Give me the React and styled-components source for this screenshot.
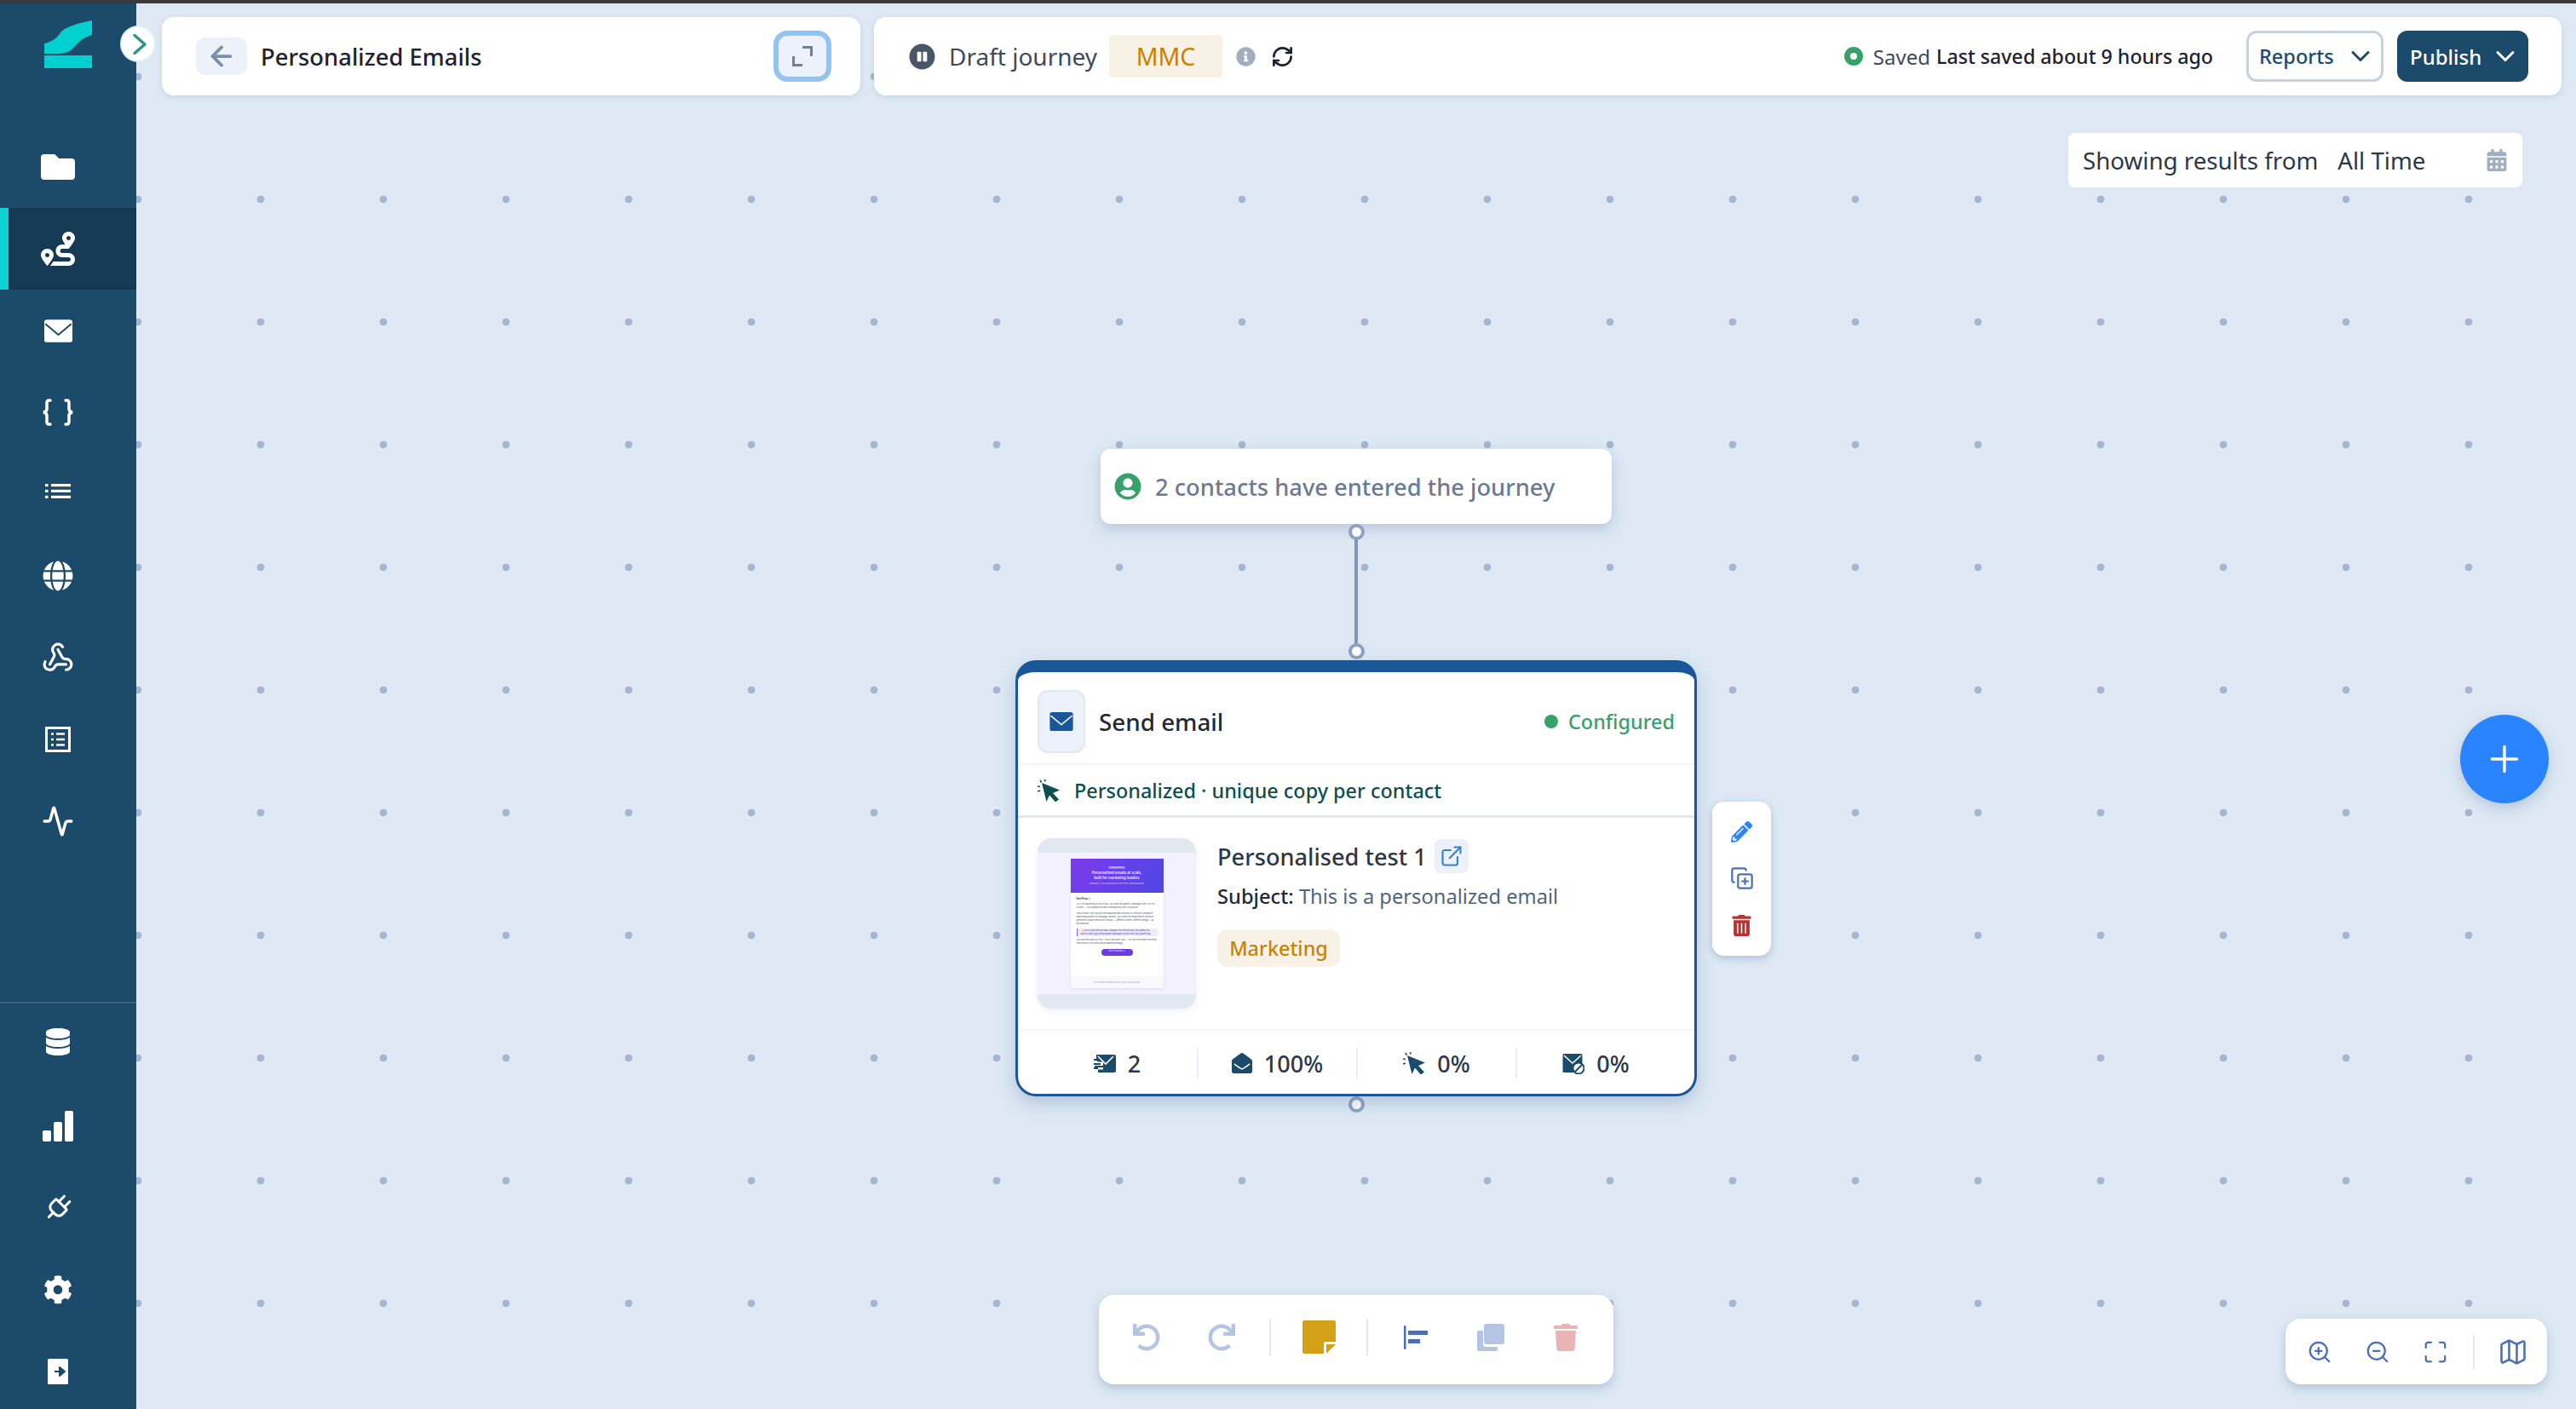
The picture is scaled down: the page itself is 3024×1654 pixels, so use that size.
import React from 'react';
import styled, { createGlobalStyle } from 'styled-components';
import {
  FaFolder,
  FaRoute,
  FaGlobe,
  FaDatabase,
  FaCog,
  FaUserCircle,
  FaPauseCircle,
  FaInfoCircle,
  FaCalendarAlt,
  FaPencilAlt,
  FaTrashAlt,
  FaTrash,
  FaUndo,
  FaRedo,
  FaEnvelopeOpen,
} from 'react-icons/fa';
import {
  Activity,
  ArrowLeft,
  CopyPlus,
  ExternalLink,
  Map as MapIcon,
  Maximize,
  Plug,
  Plus,
  RefreshCw,
  Webhook,
  ZoomIn,
  ZoomOut,
} from 'lucide-react';

const GlobalStyle = createGlobalStyle`
  html, body {
    margin: 0;
    padding: 0;
    height: 100%;
  }
  body {
    font-family: "Noto Sans", "Open Sans", sans-serif;
    color: #1a2233;
    background: #dde8f4;
  }
  * {
    box-sizing: border-box;
  }
`;

const Shell = styled.div`
  position: relative;
  display: flex;
  flex-direction: column;
  width: 100%;
  height: 100vh;
  overflow: hidden;
`;

const TitleStrip = styled.div`
  flex: 0 0 4px;
  background: #3b3b3b;
`;

const Main = styled.div`
  flex: 1;
  display: flex;
  min-height: 0;
`;

const Sidebar = styled.nav`
  flex: 0 0 160px;
  display: flex;
  flex-direction: column;
  background: #1b4a6b;
`;

const LogoBox = styled.div`
  height: 144px;
  padding: 20px 0 0 52px;
`;

const NavList = styled.div`
  display: flex;
  flex-direction: column;
`;

const NavBottom = styled(NavList)`
  margin-top: auto;
  margin-bottom: -4px;
  border-top: 2px solid #39627f;
`;

const NavItem = styled.div`
  height: 96px;
  display: flex;
  align-items: center;
  justify-content: center;
  padding-right: 24px;
  padding-bottom: ${(p) => p.$lift || 0}px;
  color: #fff;
  background: ${(p) => (p.$active ? '#163a54' : 'transparent')};
  box-shadow: ${(p) => (p.$active ? 'inset 10px 0 0 #0fd0d0' : 'none')};
`;

const CollapseToggle = styled.button`
  position: absolute;
  left: 141px;
  top: 30px;
  width: 42px;
  height: 43px;
  display: flex;
  align-items: center;
  justify-content: center;
  padding: 0 0 0 3px;
  border: 2px solid #e6edf5;
  border-radius: 50%;
  background: #fff;
  color: #2a9488;
`;

const Canvas = styled.main`
  position: relative;
  flex: 1;
  display: flex;
  flex-direction: column;
  padding: 16px 17px 0 30px;
  background-color: #dde8f4;
  background-image: radial-gradient(circle, #a3b6cc 4px, transparent 4.6px);
  background-size: 144px 144px;
  background-position: -70px 14px;
`;

const TopRow = styled.div`
  display: flex;
  gap: 16px;
`;

const HeaderCard = styled.div`
  flex: ${(p) => (p.$grow ? '1' : '0 0 820px')};
  height: 92px;
  display: flex;
  align-items: center;
  padding: ${(p) => (p.$grow ? '0 39px 0 41px' : '0 34px 0 40px')};
  background: #fff;
  border-radius: 14px;
  box-shadow: 0 2px 6px rgba(90, 115, 150, 0.16);
`;

const BackButton = styled.button`
  width: 60px;
  height: 44px;
  display: flex;
  align-items: center;
  justify-content: center;
  padding: 0;
  border: none;
  border-radius: 10px;
  background: #edf1f9;
  color: #7890aa;
`;

const JourneyName = styled.span`
  margin-left: 16px;
  font-size: 27.4px;
  font-weight: 500;
  color: #1a2233;
`;

const ExpandButton = styled.button`
  margin-left: auto;
  width: 68px;
  height: 60px;
  display: flex;
  align-items: center;
  justify-content: center;
  padding: 0;
  border: 6px solid #93c3f0;
  border-radius: 16px;
  background: #edf1f9;
  color: #718096;
`;

const StatusText = styled.span`
  margin-left: 16px;
  font-size: 28px;
  color: #3d4a5c;
`;

const OrgTag = styled.span`
  margin-left: 14px;
  width: 133px;
  height: 50px;
  display: flex;
  align-items: center;
  justify-content: center;
  border-radius: 4px;
  background: #f8f2e6;
  color: #c98200;
  font-size: 28.5px;
`;

const IconSlot = styled.span`
  display: flex;
  margin-left: ${(p) => p.$gap || 0}px;
  color: ${(p) => p.$color || 'inherit'};
`;

const CalendarSlot = styled(IconSlot)`
  margin-left: auto;
`;

const SavedDot = styled.span`
  margin-left: auto;
  width: 22px;
  height: 22px;
  border: 7px solid #38a169;
  border-radius: 50%;
  background: #fff;
`;

const SavedText = styled.span`
  margin-left: 12px;
  font-size: 24px;
  color: #3d4a5c;
`;

const SavedAt = styled.span`
  margin-left: 7px;
  font-size: 23.2px;
  font-weight: 500;
  color: #1a2233;
`;

const HeadButton = styled.button`
  height: 60px;
  width: ${(p) => p.$width}px;
  margin-left: ${(p) => p.$gap}px;
  display: flex;
  align-items: center;
  justify-content: space-between;
  padding: 0 12px;
  border: 3px solid ${(p) => (p.$primary ? '#1b4a6b' : '#c5d2df')};
  border-radius: 12px;
  background: ${(p) => (p.$primary ? '#1b4a6b' : '#fff')};
  color: ${(p) => (p.$primary ? '#fff' : '#1b4a6b')};
  font-family: inherit;
  font-size: ${(p) => (p.$primary ? '24px' : '23.5px')};
  font-weight: 500;
`;

const RangeChip = styled.div`
  align-self: flex-end;
  margin: 44px 46px 0 0;
  width: 533px;
  height: 64px;
  display: flex;
  align-items: center;
  padding: 0 17px;
  border-radius: 8px;
  background: #fff;
  font-size: 27.7px;
  color: #2d3748;
`;

const RangeValue = styled.span`
  margin-left: 23px;
`;

const Flow = styled.div`
  position: absolute;
  left: 1032px;
  top: 523px;
  width: 800px;
  display: flex;
  flex-direction: column;
  align-items: center;
`;

const EntryNode = styled.div`
  width: 600px;
  height: 88px;
  display: flex;
  align-items: center;
  gap: 16px;
  padding-left: 16px;
  border-radius: 12px;
  background: #fff;
  box-shadow: 0 6px 16px rgba(90, 115, 150, 0.28);
  color: #6b7a94;
  font-size: 27.3px;
  font-weight: 500;
`;

const Handle = styled.span`
  width: 19px;
  height: 19px;
  flex: none;
  border: 4px solid #8ea2c0;
  border-radius: 50%;
  background: #fff;
`;

const Edge = styled.span`
  width: 4px;
  height: 123px;
  margin: -1px 0;
  background: #7f96b6;
`;

const EmailCard = styled.section`
  position: relative;
  width: 800px;
  height: 512px;
  margin-top: 1px;
  display: flex;
  flex-direction: column;
  border: 3px solid #1a5799;
  border-top-width: 14px;
  border-radius: 24px;
  background: #fff;
  box-shadow: 0 8px 20px rgba(90, 115, 150, 0.3);
`;

const CardHead = styled.header`
  height: 109px;
  display: flex;
  align-items: center;
  padding: 8px 23px 0;
  border-bottom: 2px solid #f4f6fa;
`;

const TypeIcon = styled.span`
  width: 56px;
  height: 74px;
  display: flex;
  align-items: center;
  justify-content: center;
  border: 2px solid #e2e8f0;
  border-radius: 12px;
  background: #ecf0f8;
  color: #1a5799;
`;

const CardTitle = styled.h2`
  margin: 0 0 0 16px;
  font-size: 27.8px;
  font-weight: 500;
  color: #1f2937;
`;

const ConfigState = styled.span`
  margin-left: auto;
  display: flex;
  align-items: center;
  gap: 12px;
  color: #38a169;
  font-size: 23.4px;
  font-weight: 500;
`;

const GreenDot = styled.span`
  width: 16px;
  height: 16px;
  border-radius: 50%;
  background: #38a169;
`;

const ModeRow = styled.div`
  height: 62px;
  display: flex;
  align-items: center;
  gap: 17px;
  padding: 0 23px;
  border-bottom: 3px solid #e2e8f0;
  color: #0b4f4f;
  font-size: 23.4px;
  font-weight: 500;
`;

const CardBody = styled.div`
  flex: 1;
  display: flex;
  align-items: flex-start;
  gap: 25px;
  padding: 24px 23px 0;
  border-bottom: 2px solid #f4f6fa;
`;

const Thumb = styled.div`
  flex: 0 0 186px;
  height: 200px;
  display: flex;
  justify-content: center;
  padding-top: 7px;
  border-top: 17px solid #e2e8f0;
  border-bottom: 17px solid #e2e8f0;
  border-radius: 16px;
  background: #f3f1ff;
  box-shadow: 0 2px 6px rgba(90, 115, 150, 0.12);
  overflow: hidden;
`;

const MiniMail = styled.div`
  width: 109px;
  height: 152px;
  display: flex;
  flex-direction: column;
  background: #fff;
  font-family: "Inter", sans-serif;
  color: #4b5563;
  box-shadow: 0 1px 3px rgba(90, 80, 180, 0.14);
`;

const MiniHero = styled.div`
  height: 40px;
  display: flex;
  flex-direction: column;
  align-items: center;
  justify-content: center;
  background: linear-gradient(120deg, #7c3aed, #4f46e5);
  color: #f2eeff;
  text-align: center;
`;

const MiniBadge = styled.span`
  padding: 0 2px;
  border-radius: 1px;
  background: rgba(255, 255, 255, 0.3);
  font-size: 2px;
  line-height: 3px;
`;

const MiniHeadline = styled.div`
  margin-top: 2px;
  font-size: 4.2px;
  font-weight: 600;
  line-height: 6.5px;
`;

const MiniSub = styled.div`
  margin-top: 1px;
  font-size: 2.4px;
  line-height: 4px;
  color: #d9d0ff;
`;

const MiniBody = styled.div`
  flex: 1;
  padding: 5px 7px 0;
  font-size: 2.4px;
  line-height: 4.1px;
`;

const MiniHello = styled.div`
  margin-bottom: 3px;
  font-size: 2.8px;
  font-weight: 700;
  color: #1f2937;
`;

const MiniText = styled.p`
  margin: 0 0 2.5px;
`;

const MiniCallout = styled.div`
  margin: 3px 0;
  padding: 1px 4px;
  border-left: 1px solid #7c6be8;
  background: #eeebfd;
  color: #4338ca;
  line-height: 3.6px;
`;

const MiniCta = styled.div`
  width: 37px;
  height: 8px;
  margin: 3px auto 0;
  display: flex;
  align-items: center;
  justify-content: center;
  border-radius: 4px;
  background: #6d3be0;
  color: #fff;
  font-size: 2.4px;
`;

const MiniFoot = styled.div`
  height: 14px;
  display: flex;
  align-items: center;
  justify-content: center;
  background: #f9f9fd;
  color: #a1a1b5;
  font-size: 2px;
`;

const Details = styled.div`
  display: flex;
  flex-direction: column;
  align-items: flex-start;
  min-width: 0;
`;

const TemplateRow = styled.div`
  display: flex;
  align-items: center;
  gap: 9px;
  height: 42px;
  font-size: 27.2px;
  font-weight: 500;
  color: #2d3748;
`;

const LinkButton = styled.span`
  width: 40px;
  height: 40px;
  display: flex;
  align-items: center;
  justify-content: center;
  border-radius: 8px;
  background: #ecf0f8;
  color: #3182ce;
`;

const SubjectLine = styled.div`
  margin-top: 9px;
  font-size: 23.7px;
  line-height: 34px;
  color: #4f6583;
`;

const SubjectLabel = styled.span`
  font-weight: 500;
  color: #1f2937;
`;

const CategoryPill = styled.span`
  margin-top: 22px;
  width: 144px;
  height: 44px;
  display: flex;
  align-items: center;
  justify-content: center;
  border-radius: 12px;
  background: #f8f2e6;
  color: #c98200;
  font-size: 23.4px;
  font-weight: 500;
`;

const StatsRow = styled.div`
  flex: 0 0 74px;
  display: grid;
  grid-template-columns: repeat(4, 187px);
  align-items: center;
  padding: 2px 23px 0;
`;

const Stat = styled.div`
  height: 36px;
  display: flex;
  align-items: center;
  justify-content: center;
  gap: 14px;
  border-left: ${(p) => (p.$first ? 'none' : '2px solid #e8edf3')};
  color: #1b4a6b;
`;

const StatValue = styled.span`
  font-size: 27px;
  font-weight: 500;
  color: #2d3748;
`;

const NodeActions = styled.div`
  position: absolute;
  left: calc(100% + 21px);
  top: 152px;
  width: 69px;
  height: 181px;
  display: flex;
  flex-direction: column;
  align-items: center;
  gap: 29px;
  padding-top: 22px;
  border-radius: 14px;
  background: #fff;
  box-shadow: 0 3px 8px rgba(90, 115, 150, 0.35);
`;

const ActionIcon = styled.span`
  display: flex;
  height: 26px;
  align-items: center;
  color: ${(p) => p.$color};
`;

const Fab = styled.button`
  position: absolute;
  right: 32px;
  top: 835px;
  width: 104px;
  height: 104px;
  display: flex;
  align-items: center;
  justify-content: center;
  padding: 0;
  border: none;
  border-radius: 50%;
  background: #2a84ff;
  color: #fff;
  box-shadow: 0 6px 16px rgba(90, 115, 150, 0.28);
`;

const FloatBar = styled.div`
  position: absolute;
  bottom: 29px;
  display: flex;
  align-items: center;
  padding: 0 ${(p) => p.$pad}px;
  background: #fff;
  border-radius: 18px;
  box-shadow: 0 5px 12px rgba(90, 115, 150, 0.3);
`;

const EditBar = styled(FloatBar)`
  left: 1130px;
  height: 105px;
  padding-bottom: 6px;
`;

const ViewBar = styled(FloatBar)`
  right: 34px;
  height: 77px;
`;

const BarSlot = styled.span`
  width: ${(p) => p.$width}px;
  display: flex;
  justify-content: center;
  color: ${(p) => p.$color};
`;

const BarDivider = styled.span`
  width: 2px;
  height: ${(p) => p.$height}px;
  margin: 0 ${(p) => p.$gap}px;
  background: #e2e8f0;
`;

const Mail = ({ width, height, line }) => (
  <svg width={width} height={height} viewBox="0 0 26 21">
    <rect width="26" height="21" rx="2.5" fill="currentColor" />
    <path d="M1 4l12 10 12-10" fill="none" stroke={line} strokeWidth="1.6" />
  </svg>
);

const Braces = () => (
  <svg width="38" height="32" viewBox="0 0 38 32" fill="none" stroke="currentColor" strokeWidth="3.5" strokeLinecap="round">
    <path d="M10 2H8.5C6.5 2 6 3.5 6 5v7c0 2-1.5 3.5-4 4 2.5.5 4 2 4 4v7c0 1.5.5 3 2.5 3H10" />
    <path d="M28 2h1.5C31.5 2 32 3.5 32 5v7c0 2 1.5 3.5 4 4-2.500.5-4 2-4 4v7c0 1.5-.5 3-2.500 3H28" />
  </svg>
);

const ListLines = () => (
  <svg width="30" height="17" viewBox="0 0 30 17" fill="currentColor">
    <rect width="3.5" height="3.2" />
    <rect y="6.8" width="3.5" height="3.2" />
    <rect y="13.8" width="3.5" height="3.2" />
    <rect x="7" width="23" height="3.2" />
    <rect x="7" y="6.8" width="23" height="3.2" />
    <rect x="7" y="13.8" width="23" height="3.2" />
  </svg>
);

const FormList = () => (
  <svg width="30" height="30" viewBox="0 0 30 30">
    <rect x="1.5" y="1.5" width="27" height="27" fill="none" stroke="currentColor" strokeWidth="3" />
    <path d="M7 8.5h3M13 8.5h10M7 15h3M13 15h10M7 21.5h3M13 21.5h10" stroke="currentColor" strokeWidth="2.6" />
  </svg>
);

const Bars = () => (
  <svg width="36" height="36" viewBox="0 0 36 36" fill="currentColor">
    <rect y="23" width="10" height="13" rx="2" />
    <rect x="13" y="13" width="10" height="23" rx="2" />
    <rect x="26" width="10" height="36" rx="2" />
  </svg>
);

const ExitBox = () => (
  <svg width="24" height="30" viewBox="0 0 24 30">
    <rect width="24" height="30" rx="1.5" fill="#fff" />
    <path d="M8 15h11M14 10l6 5-6 5z" fill="#1b4a6b" stroke="#1b4a6b" strokeWidth="2" strokeLinejoin="round" />
  </svg>
);

const Logo = () => (
  <svg width="56" height="56" viewBox="0 0 56 56" fill="#00d1cf">
    <path d="M56 0v17C43 20 38 29 31 35c-7 5-17 4-31 4V27c9-2 15-6 20-14C27 7 40 3 56 0z" />
    <rect y="41" width="56" height="15" />
  </svg>
);

const CornerExpand = () => (
  <svg width="24" height="24" viewBox="0 0 24 24" fill="none" stroke="currentColor" strokeWidth="3">
    <path d="M12 1.5h10.5V12M12 22.5H1.5V12" />
  </svg>
);

const Caret = () => (
  <svg width="24" height="14" viewBox="0 0 24 14" fill="none" stroke="currentColor" strokeWidth="3" strokeLinecap="round" strokeLinejoin="round">
    <path d="M3 2.5l9 9 9-9" />
  </svg>
);

const ToggleCaret = () => (
  <svg width="18" height="26" viewBox="0 0 18 26" fill="none" stroke="currentColor" strokeWidth="3.4" strokeLinecap="round" strokeLinejoin="round">
    <path d="M3 2.5L15 13 3 23.5" />
  </svg>
);

const ClickPointer = ({ size, color }) => (
  <svg width={size} height={size} viewBox="0 0 26 26">
    <path d="M5 4l21 8.500-8 3.500 7 7.500-4 3-7-8-3.500 7.500z" fill={color} />
    <path d="M8.500 0l.5 2.500M3 1l1.500 2.500M0 8l3 .5M0 14l3-1" stroke={color} strokeWidth="1.6" />
  </svg>
);

const SentMail = () => (
  <svg width="26" height="21" viewBox="0 0 26 21" fill="#1b4a6b">
    <path d="M3 0h21a2 2 0 0 1 2 2v17a2 2 0 0 1-2 2H5v-3.500h6V15H1v-2h10V8.500H5L3 7z" />
    <path d="M5 2l9 9 9-9" fill="none" stroke="#fff" strokeWidth="1.6" />
    <rect y="5" width="7" height="2" />
    <rect y="10" width="8" height="2" />
    <rect y="15" width="5" height="2" />
  </svg>
);

const BlockedMail = () => (
  <svg width="26" height="26" viewBox="0 0 26 26">
    <path d="M2 2h20a1.500 1.500 0 0 1 1.500 1.500V24H2a1.500 1.500 0 0 1-1.500-1.500v-19A1.500 1.500 0 0 1 2 2z" fill="#1b4a6b" />
    <path d="M2 4l10 9 10-9" fill="none" stroke="#fff" strokeWidth="1.6" />
    <circle cx="19" cy="19" r="6.5" fill="#fff" stroke="#1b4a6b" strokeWidth="2" />
    <path d="M15 23l8-8" stroke="#1b4a6b" strokeWidth="2" />
  </svg>
);

const StickyNote = () => (
  <svg width="39" height="39" viewBox="0 0 39 39">
    <path d="M2 0h35a2 2 0 0 1 2 2v23H27a2 2 0 0 0-2 2v12H2a2 2 0 0 1-2-2V2a2 2 0 0 1 2-2z" fill="#d4a017" />
    <path d="M39 28L28 39V28z" fill="#d4a017" />
  </svg>
);

const AlignLeft = () => (
  <svg width="28" height="28" viewBox="0 0 28 28" fill="#4a6fb5">
    <rect width="2.5" height="28" rx="1" />
    <rect x="5" y="6" width="23" height="5" />
    <rect x="5" y="16" width="14" height="5" />
  </svg>
);

const CopyStack = () => (
  <svg width="32" height="32" viewBox="0 0 32 32" fill="#b4c5e4">
    <path d="M2 8h5v16a3 3 0 0 0 3 3h14v3a2 2 0 0 1-2 2H2a2 2 0 0 1-2-2V10a2 2 0 0 1 2-2z" />
    <rect x="8" width="24" height="24" rx="3" />
  </svg>
);

const topNav = [
  { icon: <FaFolder size={40} /> },
  { icon: <FaRoute size={40} />, active: true },
  { icon: <Mail width={33} height={27} line="#1b4a6b" /> },
  { icon: <Braces /> },
  { icon: <ListLines />, lift: 8 },
  { icon: <FaGlobe size={36} /> },
  { icon: <Webhook size={38} strokeWidth={2} /> },
  { icon: <FormList /> },
  { icon: <Activity size={38} strokeWidth={2.2} /> },
];

const bottomNav = [
  { id: 'data', icon: <FaDatabase size={32} />, lift: 6 },
  { id: 'bars', icon: <Bars /> },
  { id: 'plug', icon: <Plug size={36} strokeWidth={2} style={{ transform: 'rotate(45deg)' }} /> },
  { id: 'cog', icon: <FaCog size={34} /> },
  { id: 'exit', icon: <ExitBox /> },
];

const stats = [
  { icon: <SentMail />, value: '2' },
  { icon: <FaEnvelopeOpen size={24} />, value: '100%' },
  { icon: <ClickPointer size={26} color="#1b4a6b" />, value: '0%' },
  { icon: <BlockedMail />, value: '0%' },
];

function EmailThumb() {
  return (
    <Thumb>
      <MiniMail>
        <MiniHero>
          <MiniBadge>SPRING UPDATE</MiniBadge>
          <MiniHeadline>
            Personalized emails at scale,
            <br />
            built for marketing leaders
          </MiniHeadline>
          <MiniSub>Relevance, your way and built with every personalization</MiniSub>
        </MiniHero>
        <MiniBody>
          <MiniHello>Hey Priya 👋</MiniHello>
          <MiniText>As VP of Marketing at NorthLoop, you know that generic campaigns don't cut it in FinTech — your audience expects relevance at every touchpoint.</MiniText>
          <MiniText>That's exactly why we built Personalized Email Sections in Inflection. Instead of maintaining dozens of campaign variants, you create one email and let Inflection generate a unique version per contact — different content, different design — all automatically.</MiniText>
          <MiniCallout>💡 For a 15,000 person SaaS company like ServiceLoop, this means you save a hyper-logic personalized campaigns without the copy guide filing.</MiniCallout>
          <MiniText>You can even open in HTML, you're welcome, Clay — no your enrichment workflow flows directly into a few words/sample message.</MiniText>
          <MiniCta>See it in action →</MiniCta>
        </MiniBody>
        <MiniFoot>You received this email because you are a valued contact</MiniFoot>
      </MiniMail>
    </Thumb>
  );
}

export default function App() {
  return (
    <Shell>
      <GlobalStyle />
      <TitleStrip />
      <Main>
        <Sidebar>
          <LogoBox>
            <Logo />
          </LogoBox>
          <NavList>
            {topNav.map((item, i) => (
              <NavItem key={i} $active={item.active} $lift={item.lift}>
                {item.icon}
              </NavItem>
            ))}
          </NavList>
          <NavBottom>
            {bottomNav.map((item) => (
              <NavItem key={item.id} $lift={item.lift}>
                {item.icon}
              </NavItem>
            ))}
          </NavBottom>
        </Sidebar>

        <Canvas>
          <TopRow>
            <HeaderCard>
              <BackButton>
                <ArrowLeft size={36} strokeWidth={2.5} />
              </BackButton>
              <JourneyName>Personalized Emails</JourneyName>
              <ExpandButton>
                <CornerExpand />
              </ExpandButton>
            </HeaderCard>
            <HeaderCard $grow>
              <IconSlot $color="#4a5568">
                <FaPauseCircle size={31} />
              </IconSlot>
              <StatusText>Draft journey</StatusText>
              <OrgTag>MMC</OrgTag>
              <IconSlot $gap={16} $color="#a0aec0">
                <FaInfoCircle size={23} />
              </IconSlot>
              <IconSlot $gap={18} $color="#1a2233">
                <RefreshCw size={27} strokeWidth={2.4} />
              </IconSlot>
              <SavedDot />
              <SavedText>Saved</SavedText>
              <SavedAt>Last saved about 9 hours ago</SavedAt>
              <HeadButton $width={161} $gap={39}>
                Reports
                <Caret />
              </HeadButton>
              <HeadButton $width={154} $gap={16} $primary>
                Publish
                <Caret />
              </HeadButton>
            </HeaderCard>
          </TopRow>

          <RangeChip>
            Showing results from
            <RangeValue>All Time</RangeValue>
            <CalendarSlot $color="#a0aec0">
              <FaCalendarAlt size={26} />
            </CalendarSlot>
          </RangeChip>

          <Flow>
            <EntryNode>
              <IconSlot $color="#38a169">
                <FaUserCircle size={32} />
              </IconSlot>
              2 contacts have entered the journey
            </EntryNode>
            <Handle />
            <Edge />
            <Handle />
            <EmailCard>
              <CardHead>
                <TypeIcon>
                  <Mail width={28} height={22} line="#ecf0f8" />
                </TypeIcon>
                <CardTitle>Send email</CardTitle>
                <ConfigState>
                  <GreenDot />
                  Configured
                </ConfigState>
              </CardHead>
              <ModeRow>
                <ClickPointer size={26} color="#0b4f4f" />
                Personalized · unique copy per contact
              </ModeRow>
              <CardBody>
                <EmailThumb />
                <Details>
                  <TemplateRow>
                    Personalised test 1
                    <LinkButton>
                      <ExternalLink size={28} strokeWidth={1.8} />
                    </LinkButton>
                  </TemplateRow>
                  <SubjectLine>
                    <SubjectLabel>Subject:</SubjectLabel> This is a personalized email
                  </SubjectLine>
                  <CategoryPill>Marketing</CategoryPill>
                </Details>
              </CardBody>
              <StatsRow>
                {stats.map((stat, i) => (
                  <Stat key={i} $first={i === 0}>
                    {stat.icon}
                    <StatValue>{stat.value}</StatValue>
                  </Stat>
                ))}
              </StatsRow>
              <NodeActions>
                <ActionIcon $color="#2a84ff">
                  <FaPencilAlt size={25} />
                </ActionIcon>
                <ActionIcon $color="#4a6fb5">
                  <CopyPlus size={28} strokeWidth={1.9} />
                </ActionIcon>
                <ActionIcon $color="#b83232">
                  <FaTrashAlt size={25} />
                </ActionIcon>
              </NodeActions>
            </EmailCard>
            <Handle />
          </Flow>

          <Fab>
            <Plus size={50} strokeWidth={1.6} />
          </Fab>

          <EditBar $pad={12}>
            <BarSlot $width={88} $color="#b4c5e4">
              <FaUndo size={32} />
            </BarSlot>
            <BarSlot $width={88} $color="#b4c5e4">
              <FaRedo size={32} />
            </BarSlot>
            <BarDivider $height={44} $gap={12} />
            <BarSlot $width={88}>
              <StickyNote />
            </BarSlot>
            <BarDivider $height={44} $gap={12} />
            <BarSlot $width={88}>
              <AlignLeft />
            </BarSlot>
            <BarSlot $width={88}>
              <CopyStack />
            </BarSlot>
            <BarSlot $width={88} $color="#e8b4b4">
              <FaTrash size={32} />
            </BarSlot>
          </EditBar>

          <ViewBar $pad={6}>
            <BarSlot $width={68} $color="#4a6fb5">
              <ZoomIn size={30} strokeWidth={1.8} />
            </BarSlot>
            <BarSlot $width={68} $color="#4a6fb5">
              <ZoomOut size={30} strokeWidth={1.8} />
            </BarSlot>
            <BarSlot $width={68} $color="#4a6fb5">
              <Maximize size={30} strokeWidth={1.8} />
            </BarSlot>
            <BarDivider $height={40} $gap={10} />
            <BarSlot $width={69} $color="#4a6fb5">
              <MapIcon size={36} strokeWidth={1.7} />
            </BarSlot>
          </ViewBar>
        </Canvas>
      </Main>

      <CollapseToggle>
        <ToggleCaret />
      </CollapseToggle>
    </Shell>
  );
}
